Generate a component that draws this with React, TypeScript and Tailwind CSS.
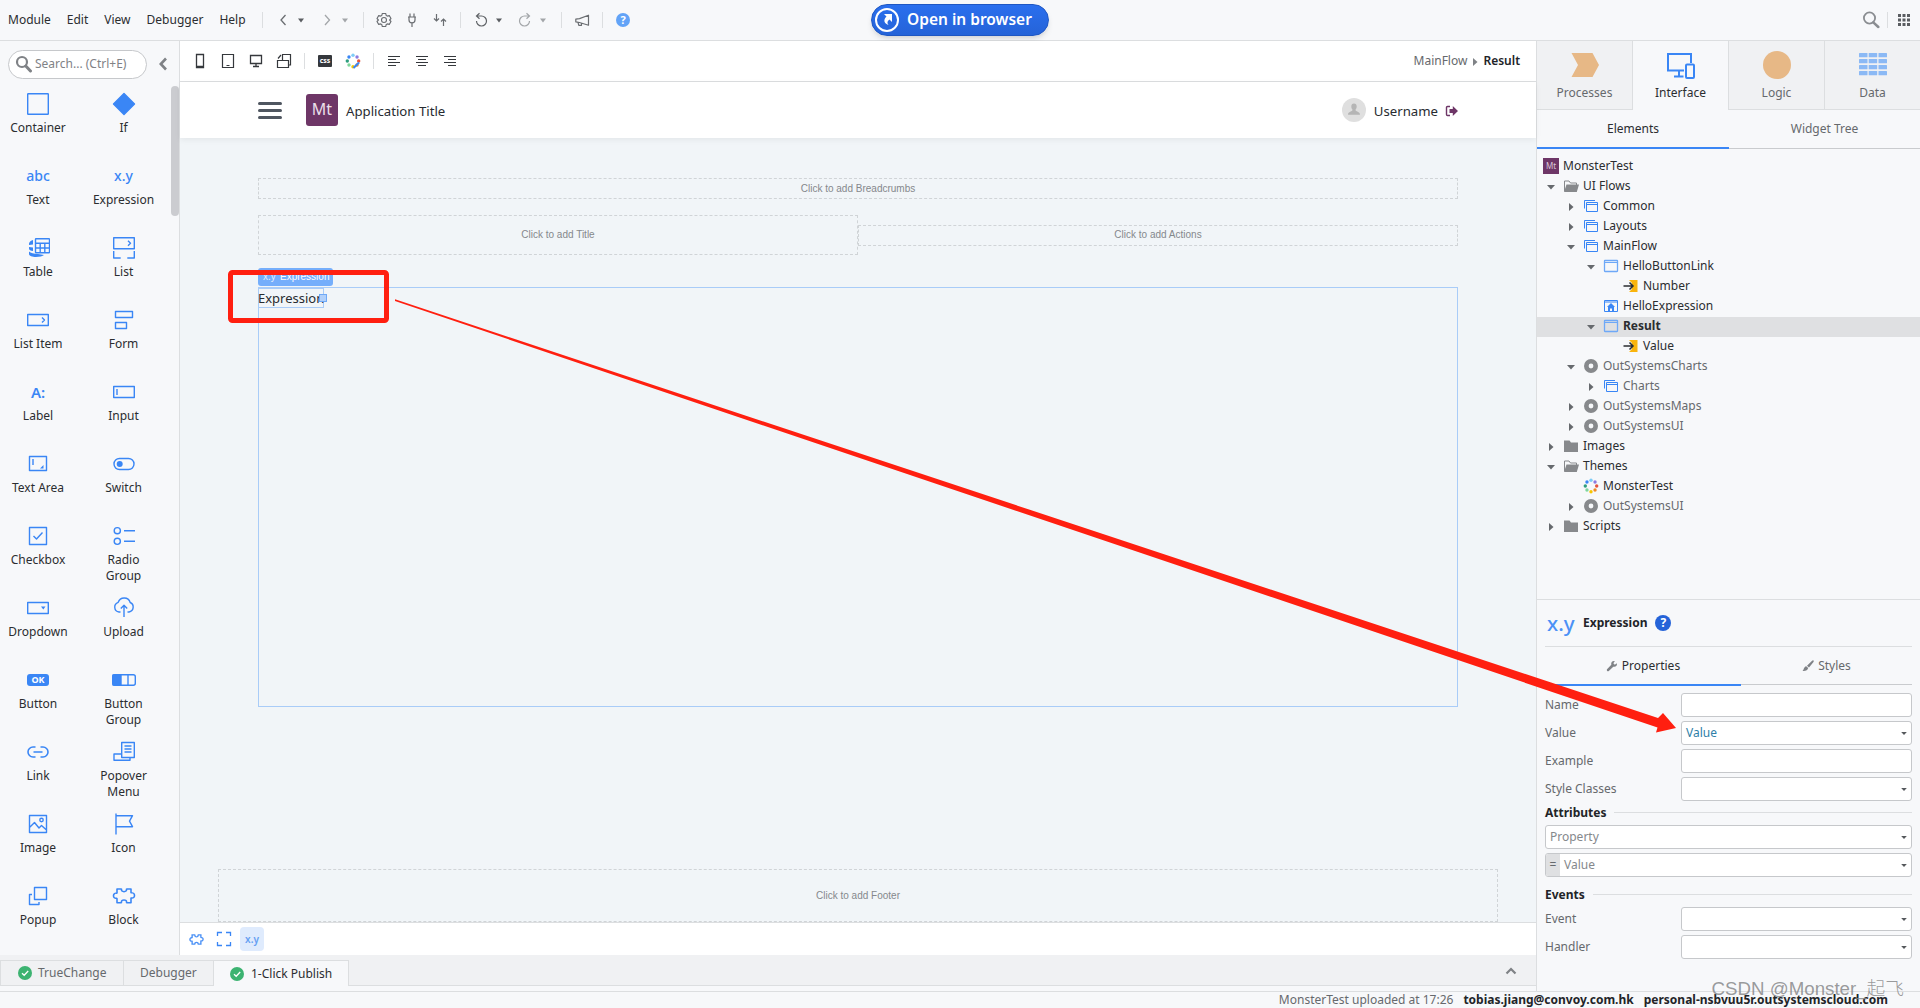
import type { ReactNode } from 'react';

const BLUE = '#3a86f5';

// ---------- shared bits ----------

function Svg({ w = 16, h = w, className = '', children }: { w?: number; h?: number; className?: string; children: ReactNode }) {
  return (
    <svg width={w} height={h} viewBox={`0 0 ${w} ${h}`} fill="none" className={`shrink-0 ${className}`}>
      {children}
    </svg>
  );
}

function Sep({ className = 'mx-3' }: { className?: string }) {
  return <div className={`h-4 w-px shrink-0 bg-[#dcdee0] ${className}`} />;
}

function CaretDown({ color = '#5a5d61', className = '' }: { color?: string; className?: string }) {
  return (
    <Svg w={8} className={className}>
      <path d="M1 2.5h6L4 6.5z" fill={color} />
    </Svg>
  );
}

const RING = ['#7fcdf7', '#8c7be0', '#e5533d', '#f08a24', '#f7c600', '#7fd69c', '#2f9e7e', '#3a86f5'];

function RingDots() {
  return (
    <>
      {RING.map((c, i) => {
        const a = (i * Math.PI) / 4 - Math.PI / 2;
        return <circle key={c} cx={8 + 5.7 * Math.cos(a)} cy={8 + 5.7 * Math.sin(a)} r="1.7" fill={c} />;
      })}
    </>
  );
}

const PUZZLE =
  'M5 4h4.2c.3 0 .4.3.3.6-.3 1.6.8 2.6 2.5 2.6s2.8-1 2.5-2.6c-.1-.3 0-.6.3-.6H19v4.2c0 .4.3.5.6.4 1.600-.4 2.900.9 2.900 2.900s-1.300 3.300-2.900 2.900c-.3-.1-.6 0-.6.4V20h-4.200c-.3 0-.4-.3-.3-.6.3-1.600-.8-2.600-2.500-2.600s-2.800 1-2.500 2.600c.1.3 0 .6-.3.6H5v-4.800c0-.4-.3-.5-.6-.4-1.600.4-2.900-.9-2.900-2.900s1.300-3.300 2.900-2.900c.3.1.6 0 .6-.4z';

// ---------- top bar ----------

function TopBar() {
  return (
    <div className="grid h-[41px] grid-cols-[1fr_auto_1fr] border-b border-[#dcdee0] bg-[#f7f8fa] text-[#2b2d30]">
      <div className="flex h-10 items-center">
        <div className="flex w-[262px] shrink-0 gap-4 pl-2">
          {['Module', 'Edit', 'View', 'Debugger', 'Help'].map(m => (
            <span key={m}>{m}</span>
          ))}
        </div>
        <Sep className="mr-3" />
        <Svg><path d="M10.500 3L6 8l4.500 5" stroke="#6a6d71" strokeWidth="1.300" /></Svg>
        <CaretDown className="ml-1.5" />
        <Svg className="ml-3.5"><path d="M6 3l4.500 5L6 13" stroke="#a3a6a9" strokeWidth="1.300" /></Svg>
        <CaretDown color="#a3a6a9" className="ml-1.5" />
        <Sep className="mr-3 ml-3.5" />
        <Svg>
          <path d="M6.300 1.500h3.400l.5 1.900 1.200.7 1.900-.5 1.700 2.900-1.400 1.500 1.400 1.500-1.700 2.900-1.900-.5-1.200.7-.5 1.900H6.300l-.5-1.900-1.200-.7-1.900.5L1 9.500 2.400 8 1 6.500l1.700-2.900 1.900.5 1.200-.7z" stroke="#6a6d71" strokeWidth="1.100" strokeLinejoin="round" />
          <circle cx="8" cy="8" r="2.500" stroke="#6a6d71" strokeWidth="1.100" />
        </Svg>
        <Svg className="ml-3">
          <path d="M6 1.500V5M10 1.500V5M4 5h8M5 5v3c0 1.800 1.200 2.800 3 2.800S11 9.800 11 8V5M8 10.800V15" stroke="#6a6d71" strokeWidth="1.200" />
        </Svg>
        <Svg className="ml-3">
          <path d="M4.500 2v6.500M2 6.500l2.500 2.500L7 6.500M11.500 14V7.500M9 9.500L11.500 7 14 9.500" stroke="#6a6d71" strokeWidth="1.200" />
        </Svg>
        <Sep />
        <Svg>
          <path d="M4 4h4.500a5 5 0 1 1-5 5M6.500 1.200L3.500 4l3 2.800" stroke="#5f6266" strokeWidth="1.200" />
        </Svg>
        <CaretDown className="ml-1.5" />
        <Svg className="ml-3.5">
          <path d="M12 4H7.500a5 5 0 1 0 5 5M9.500 1.200l3 2.800-3 2.800" stroke="#a3a6a9" strokeWidth="1.200" />
        </Svg>
        <CaretDown color="#a3a6a9" className="ml-1.5" />
        <Sep className="mr-3 ml-3.5" />
        <Svg>
          <path d="M14.500 3.200v10L5.500 10.500 1.800 9.800V7.200l3.700-.6zM4 10.300l.8 3h2.700v-2" stroke="#6a6d71" strokeWidth="1.200" strokeLinejoin="round" />
        </Svg>
        <Sep />
        <div className="ml-px flex h-3.5 w-3.5 items-center justify-center rounded-full bg-[#62a3f7] text-[11px] font-bold text-white">?</div>
      </div>

      <div className="my-1 flex h-8 w-[178px] items-center rounded-full border border-[#1f57c3] bg-linear-to-b from-[#2a6fee] to-[#2563d8] pl-[3px] text-white shadow-md">
        <Svg w={24}>
          <circle cx="12" cy="12" r="11" stroke="#fff" strokeWidth="2" />
          <path d="M9 6h8v8l-2.500-2.500c-2.300 1.400-2.700 3.300-1 5.500-4.500-1.500-5.500-5-2-8.500z" fill="#fff" />
        </Svg>
        <span className="ml-2 pb-0.5 text-[15.500px] font-semibold whitespace-nowrap">Open in browser</span>
      </div>

      <div className="flex h-10 items-center justify-end pr-[10px]">
        <Svg w={18}>
          <circle cx="7.500" cy="7" r="5.600" stroke="#8a8d91" strokeWidth="1.800" />
          <path d="M11.300 11.300L16.300 16" stroke="#8a8d91" strokeWidth="2.500" strokeLinecap="round" />
        </Svg>
        <Sep className="mr-[10px] ml-[7px]" />
        <Svg w={12}>
          {[0, 4.5, 9].map(x => [0, 4.5, 9].map(y => <rect key={`${x}-${y}`} x={x} y={y} width="3" height="3" fill="#5a5d61" />))}
        </Svg>
      </div>
    </div>
  );
}

// ---------- widget palette ----------

const txt = (s: string) => <span className="text-[14px] leading-6 font-medium text-[#3a86f5]">{s}</span>;

const draw = (children: ReactNode) => (
  <svg width="24" height="24" viewBox="0 0 24 24" fill="none" stroke={BLUE} strokeWidth="1.400" strokeLinejoin="round">
    {children}
  </svg>
);

const WIDGETS: { label: string; icon: ReactNode }[] = [
  { label: 'Container', icon: draw(<rect x="1.700" y="1.700" width="20.600" height="20.600" rx=".5" />) },
  { label: 'If', icon: draw(<path d="M12 1.500L22.500 12 12 22.500 1.500 12z" fill={BLUE} />) },
  { label: 'Text', icon: txt('abc') },
  { label: 'Expression', icon: txt('x.y') },
  {
    label: 'Table',
    icon: draw(
      <>
        <path d="M3 7.500c.5-2 2-3 4-3.500v4.500L3 9zM3 11l4 .5V15c-2.500 0-4-1-4-2.500zM3 15.500C4.500 17 8 18 12 18l6 1c-2.500 2.500-15 3-15-1z" fill={BLUE} stroke="none" />
        <rect x="9.500" y="2.700" width="14" height="14" rx=".5" />
        <path d="M9.500 7.200h14M9.500 12h14M14.200 7.200v9.500M18.800 7.200v9.500" />
      </>,
    ),
  },
  { label: 'List', icon: draw(<path d="M1.700 1.700h20.600v11H1.700zM16 4.700l2.500 2.500L16 9.700M1.700 15v7h7M22.300 15v7h-7" />) },
  { label: 'List Item', icon: draw(<path d="M1.700 6.500h20.600v11H1.700zM16 9.500l2.500 2.500-2.500 2.500" />) },
  { label: 'Form', icon: draw(<path d="M3.500 3.500h17v6h-17zM3.500 14.500h11v6h-11z" />) },
  { label: 'Label', icon: <span className="text-[15px] leading-6 font-semibold text-[#3a86f5]">A:</span> },
  { label: 'Input', icon: draw(<path d="M1.700 6.500h20.600v11H1.700zM5 9v6" />) },
  {
    label: 'Text Area',
    icon: draw(
      <>
        <path d="M3.500 4.500h17v14h-17zM7 7v6" />
        <path d="M17.500 13v3.500H14z" fill={BLUE} stroke="none" />
      </>,
    ),
  },
  {
    label: 'Switch',
    icon: draw(
      <>
        <rect x="2" y="6.500" width="20" height="11" rx="5.500" />
        <circle cx="7.700" cy="12" r="3" fill={BLUE} stroke="none" />
      </>,
    ),
  },
  { label: 'Checkbox', icon: draw(<path d="M3.500 3.500h17v17h-17zM7.500 12l3 3 6-6.500" />) },
  {
    label: 'Radio Group',
    icon: draw(
      <>
        <circle cx="5.300" cy="6.700" r="3.100" />
        <circle cx="5.300" cy="17.300" r="3.100" />
        <path d="M12 6.700h11M12 17.300h11" />
      </>,
    ),
  },
  {
    label: 'Dropdown',
    icon: draw(
      <>
        <path d="M1.700 6.500h20.600v11H1.700z" />
        <path d="M15 10.500h4.500l-2.200 3z" fill={BLUE} stroke="none" />
      </>,
    ),
  },
  { label: 'Upload', icon: draw(<path d="M8.500 16H7a5 5 0 0 1-.8-9.700 6.300 6.300 0 0 1 12 .2A5 5 0 0 1 17 16h-1.500M12 21V9.500M8.800 12.500L12 9.300l3.200 3.200" />) },
  {
    label: 'Button',
    icon: <span className="flex h-3 w-[22px] items-center justify-center rounded-[3px] bg-[#3a86f5] text-[9px] leading-3 font-bold text-white">OK</span>,
  },
  {
    label: 'Button Group',
    icon: draw(
      <>
        <rect x=".7" y="6.700" width="22.600" height="10.600" rx="2" />
        <path d="M1 7h8v10H1z" fill={BLUE} />
        <path d="M16 6.700v10.600" />
      </>,
    ),
  },
  { label: 'Link', icon: draw(<path d="M9.500 7H7a5 5 0 0 0 0 10h2.500M14.500 7H17a5 5 0 0 1 0 10h-2.500M7.500 12h9" strokeWidth="1.600" />) },
  { label: 'Popover Menu', icon: draw(<path d="M9.700 2.500h12.600v15H9.700zM12.500 6h7M12.500 9h7M12.500 12h7M9.700 14H2v6.300h16V17.500" />) },
  {
    label: 'Image',
    icon: draw(
      <>
        <path d="M3.500 3.500h17v17h-17zM3.500 15.500l5-5 4.500 5.500 2.500-2.500 5 4.500" />
        <circle cx="15.500" cy="8" r="1.700" />
      </>,
    ),
  },
  { label: 'Icon', icon: draw(<path d="M4 1.500v21M4 3.700h16.500l-3 5.500 3 5.500H4" />) },
  { label: 'Popup', icon: draw(<path d="M8.500 3.500h12v12h-12zM6 10.500H3.500v10h9.500V18" />) },
  { label: 'Block', icon: draw(<path d={PUZZLE} transform="translate(0 1.500) scale(1 .86)" strokeWidth="1.600" />) },
];

function Palette() {
  return (
    <div className="flex h-[914px] w-[180px] shrink-0 flex-col overflow-hidden border-r border-[#dcdee0] bg-[#f7f8fa]">
      <div className="flex h-[45px] shrink-0 items-center pt-[1px] pl-2">
        <div className="flex h-[29px] w-[139px] items-center rounded-full border border-[#c6c8cb] bg-white pl-1.5 text-[#7f8286]">
          <Svg w={18}>
            <circle cx="7" cy="7" r="5" stroke="#7f8286" strokeWidth="2.200" />
            <path d="M10.800 11L15.500 16" stroke="#7f8286" strokeWidth="3" strokeLinecap="round" />
          </Svg>
          <span className="ml-0.5">Search... (Ctrl+E)</span>
        </div>
        <Svg w={10} h={14} className="ml-[11px]">
          <path d="M8 1.500L2.800 7 8 12.500" stroke="#7f8286" strokeWidth="2.600" />
        </Svg>
      </div>
      <div className="flex">
        <div className="mt-1.5 ml-[5px] grid grid-cols-[66px_65px] gap-x-5">
          {WIDGETS.map(w => (
            <div key={w.label} className="flex h-[72px] flex-col items-center">
              <div className="flex h-6 items-center justify-center">{w.icon}</div>
              <span className="mt-1 text-center leading-4 text-[#2b2d30]">{w.label}</span>
            </div>
          ))}
        </div>
        <div className="ml-auto h-[130px] w-2 rounded-full bg-[#cbccd0]" />
      </div>
    </div>
  );
}

// ---------- canvas ----------

const INK = '#35383c';

function CanvasToolbar() {
  return (
    <div className="flex h-[41px] shrink-0 items-center gap-3 border-b border-[#dcdee0] bg-white pr-4 pl-3">
      <Svg><path d="M4.500 1.500h7v13h-7zM5 13.500h6" stroke={INK} strokeWidth="1.300" /></Svg>
      <Svg><path d="M2.500 1.500h11v13h-11zM6.500 12.500h3" stroke={INK} strokeWidth="1.200" /></Svg>
      <Svg><path d="M2.500 2.500h11v8h-11zM8 10.500V14M5 13.500h6" stroke={INK} strokeWidth="1.300" /></Svg>
      <Svg><path d="M1.500 7.500h11v7h-11zM6.500 7V1.500h8v10.500h-2.200M2 5.500L5 2" stroke={INK} strokeWidth="1.200" /></Svg>
      <Sep className="" />
      <span className="flex h-3 w-4 items-center justify-center">
        <span className="flex h-3 w-3.5 items-center justify-center rounded-[1px] bg-[#35383c] text-[7px] leading-3 font-bold text-white">css</span>
      </span>
      <Svg>
        <RingDots />
        <path d="M8.500 15l5.500-5.500" stroke={BLUE} strokeWidth="2.200" />
      </Svg>
      <Sep className="" />
      <Svg><path d="M2 3.500h12M2 6.500h8M2 9.500h12M2 12.500h8" stroke={INK} /></Svg>
      <Svg><path d="M2 3.500h12M4 6.500h8M2 9.500h12M4 12.500h8" stroke={INK} /></Svg>
      <Svg><path d="M2 3.500h12M6 6.500h8M2 9.500h12M6 12.500h8" stroke={INK} /></Svg>
      <div className="ml-auto flex items-center">
        <span className="text-[#66696d]">MainFlow</span>
        <Svg w={6} h={8} className="mx-[5px] mt-0.5"><path d="M1 0v8l4.500-4z" fill="#7f8286" /></Svg>
        <span className="font-semibold text-[#222428]">Result</span>
      </div>
    </div>
  );
}

function Placeholder({ text, className }: { text: string; className: string }) {
  return (
    <div className={`flex items-center justify-center border border-dashed border-[#d0d4d7] font-['Liberation_Sans',sans-serif] text-[10px] text-[#85888c] ${className}`}>
      {text}
    </div>
  );
}

function Canvas() {
  return (
    <div className="flex w-[1356px] shrink-0 flex-col">
      <CanvasToolbar />
      <div className="z-10 flex h-[56px] shrink-0 items-center bg-white px-[78px] text-[13.200px] text-[#272b30] shadow-[0_2px_6px_rgba(0,0,0,0.06)]">
        <div className="flex w-6 flex-col gap-1">
          <div className="h-[3px] rounded-sm bg-[#4f5660]" />
          <div className="h-[3px] rounded-sm bg-[#4f5660]" />
          <div className="h-[3px] rounded-sm bg-[#4f5660]" />
        </div>
        <div className="ml-6 flex h-8 w-8 items-center justify-center rounded-[3px] bg-[#6e3667] pb-[3px] text-[16px] text-[#eadfe9]">Mt</div>
        <span className="mt-0.5 ml-2">Application Title</span>
        <Svg w={24} className="ml-auto">
          <circle cx="12" cy="12" r="12" fill="#dfdfdf" />
          <path d="M12 5.500c1.700 0 2.700 1.200 2.700 3 0 1.500-.6 2.500-1.200 3.200 0 2 4.500 1.500 4.500 5H6c0-3.500 4.500-3 4.500-5-.6-.7-1.200-1.700-1.200-3.200 0-1.800 1-3 2.700-3z" fill="#b5b5b5" />
        </Svg>
        <span className="mt-0.5 ml-2">Username</span>
        <Svg w={13} h={12} className="mt-0.5 ml-[7px]">
          <path d="M5 1.500H2.500a1 1 0 0 0-1 1v7a1 1 0 0 0 1 1H5" stroke="#6e3667" strokeWidth="1.400" />
          <path d="M4.500 4h3.300V1L13 6l-5.200 5V8H4.500z" fill="#6e3667" />
        </Svg>
      </div>

      <div className="flex h-[784px] shrink-0 flex-col bg-[#f1f5f8] px-[38px] pt-10">
        <div className="px-10">
          <Placeholder text="Click to add Breadcrumbs" className="h-[21px]" />
          <div className="mt-4 flex items-center">
            <Placeholder text="Click to add Title" className="h-10 w-[600px]" />
            <Placeholder text="Click to add Actions" className="h-[21px] w-[600px]" />
          </div>
          <div className="mt-[13px] flex h-[18px] w-[75px] items-center rounded-[3px] bg-[#75aefb] pl-[5px] font-['Liberation_Sans',sans-serif] text-[10px] text-white">
            <span className="w-[17px] opacity-80">x.y</span>Expression
          </div>
          <div className="mt-px h-[420px] border border-[#a9ccf8]">
            <div className="relative -ml-px h-5 w-[66px] border border-[#a9ccf8] text-[13px] leading-[18px] text-[#272b30]">
              <span className="-ml-px">Expression</span>
              <div className="absolute top-[5px] left-[60px] h-2 w-2 border border-[#6fa9f7] bg-[#b1d0fa]" />
            </div>
          </div>
        </div>
        <Placeholder text="Click to add Footer" className="mt-auto h-[53px]" />
      </div>

      <div className="flex h-[33px] shrink-0 items-center border-t border-[#dcdee0] bg-white pl-2">
        <div className="flex w-4 justify-center">
          <svg width="15" height="13" viewBox="0 0 24 20" fill="none" stroke="#4b91f6" strokeWidth="2.200">
            <path d={PUZZLE} transform="translate(0 -1) scale(1 .92)" />
          </svg>
        </div>
        <Svg className="ml-3"><path d="M1.500 5V1.500H6M10 1.500h4.500V5M14.500 11v3.500H10M6 14.500H1.500V11" stroke={BLUE} strokeWidth="1.300" /></Svg>
        <div className="ml-2 flex h-6 w-6 items-center justify-center rounded bg-[#dfebfd] text-[10px] font-semibold text-[#659ff3]">x.y</div>
      </div>
    </div>
  );
}

function Check() {
  return (
    <Svg w={14}>
      <circle cx="7" cy="7" r="7" fill="#3cb371" />
      <path d="M4 7.200l2.200 2.100L10.200 5" stroke="#fff" strokeWidth="1.300" />
    </Svg>
  );
}

function BottomTabs() {
  return (
    <div className="flex h-9 w-[1536px] flex-col">
      <div className="flex h-[31px] items-end bg-[#f0f1f3] text-[#66696d]">
        <div className="flex h-[26px] w-[124px] shrink-0 items-center gap-1.5 border border-[#dcdee0] pl-[17px]"><Check />TrueChange</div>
        <div className="flex h-[26px] w-[89px] shrink-0 items-center border-y border-[#dcdee0] pl-4">Debugger</div>
        <div className="flex h-[26px] w-[136px] shrink-0 items-center gap-[7px] border-x border-t border-[#dcdee0] bg-[#f7f8fa] pl-4 text-[#2b2d30]"><Check />1-Click Publish</div>
        <div className="flex h-[26px] flex-1 items-center justify-end border-b border-[#dcdee0] pr-[19px] pb-1">
          <Svg w={12} h={8}><path d="M1.500 6.500L6 2l4.500 4.500" stroke="#7f8286" strokeWidth="2.200" /></Svg>
        </div>
      </div>
    </div>
  );
}

// ---------- right panel: element tree ----------

type IconName = 'app' | 'open' | 'folder' | 'flow' | 'screen' | 'home' | 'input' | 'gear' | 'ring';

const TREE_ICONS: Record<IconName, ReactNode> = {
  app: <span className="flex h-4 w-4 items-center justify-center bg-[#6e3667] pb-px text-[8px] leading-4 text-[#d9c6d7]">Mt</span>,
  open: (
    <Svg>
      <path d="M1.500 13V3h4.500l1.500 2h6v2" stroke="#87898c" />
      <path d="M3.500 6.500H16L13.800 14H1z" fill="#87898c" />
    </Svg>
  ),
  folder: <Svg><path d="M1 2.500h5.500L8 4.500h7V14H1z" fill="#87898c" /></Svg>,
  flow: <Svg><path d="M3.500 4.500h11v9h-11zM3.500 6.500h11M1.500 10.500v-8h10.500" stroke={BLUE} /></Svg>,
  screen: (
    <Svg>
      <rect x="1.500" y="2.500" width="13" height="11" rx=".5" stroke="#6ea8f7" strokeWidth="1.300" />
      <path d="M1.500 4.500h13" stroke="#6ea8f7" />
    </Svg>
  ),
  home: (
    <Svg>
      <path d="M1.500 2.500h13v11h-13zM1.500 4h13" stroke={BLUE} />
      <path d="M8 5l4 4h-1v4H9v-2.500H7V13H5V9H4z" fill={BLUE} />
    </Svg>
  ),
  input: (
    <Svg>
      <path d="M6 2h8.500v12H6l3-3V5z" fill="#f9b40d" />
      <path d="M.5 8h9M6.500 4.500L10 8l-3.500 3.500" stroke="#2b2d30" strokeWidth="1.500" />
    </Svg>
  ),
  gear: <Svg><circle cx="8" cy="8" r="4.700" stroke="#87898c" strokeWidth="4.600" /></Svg>,
  ring: <Svg><RingDots /></Svg>,
};

interface Node {
  label: string;
  icon: IconName;
  level: number;
  arrow?: 'down' | 'right';
  muted?: boolean;
  selected?: boolean;
}

const TREE: Node[] = [
  { label: 'UI Flows', icon: 'open', level: 0, arrow: 'down' },
  { label: 'Common', icon: 'flow', level: 1, arrow: 'right' },
  { label: 'Layouts', icon: 'flow', level: 1, arrow: 'right' },
  { label: 'MainFlow', icon: 'flow', level: 1, arrow: 'down' },
  { label: 'HelloButtonLink', icon: 'screen', level: 2, arrow: 'down' },
  { label: 'Number', icon: 'input', level: 3 },
  { label: 'HelloExpression', icon: 'home', level: 2 },
  { label: 'Result', icon: 'screen', level: 2, arrow: 'down', selected: true },
  { label: 'Value', icon: 'input', level: 3 },
  { label: 'OutSystemsCharts', icon: 'gear', level: 1, arrow: 'down', muted: true },
  { label: 'Charts', icon: 'flow', level: 2, arrow: 'right', muted: true },
  { label: 'OutSystemsMaps', icon: 'gear', level: 1, arrow: 'right', muted: true },
  { label: 'OutSystemsUI', icon: 'gear', level: 1, arrow: 'right', muted: true },
  { label: 'Images', icon: 'folder', level: 0, arrow: 'right' },
  { label: 'Themes', icon: 'open', level: 0, arrow: 'down' },
  { label: 'MonsterTest', icon: 'ring', level: 1 },
  { label: 'OutSystemsUI', icon: 'gear', level: 1, arrow: 'right', muted: true },
  { label: 'Scripts', icon: 'folder', level: 0, arrow: 'right' },
];

function Tree() {
  return (
    <div className="h-[450px] pt-2 text-[#2b2d30]">
      <div className="flex h-5 items-center pb-0.5 pl-1">
        <span className="flex w-5 justify-center">{TREE_ICONS.app}</span>
        <span className="ml-0.5">MonsterTest</span>
      </div>
      {TREE.map((n, i) => (
        <div
          key={i}
          className={`flex h-5 items-center pb-0.5 ${n.selected ? 'bg-[#dfe0e2] font-bold' : ''} ${n.muted ? 'text-[#66696d]' : ''}`}
          style={{ paddingLeft: 4 + n.level * 20 }}
        >
          <span className="flex w-5 justify-center">
            {n.arrow && (
              <Svg w={8} className="mt-px">
                <path d={n.arrow === 'down' ? 'M0 2h8L4 6.500z' : 'M2 0v8l4.500-4z'} fill="#66696d" />
              </Svg>
            )}
          </span>
          <span className="flex w-5 justify-center">{TREE_ICONS[n.icon]}</span>
          <span className="ml-0.5">{n.label}</span>
        </div>
      ))}
    </div>
  );
}

const LAYERS: { label: string; icon: ReactNode }[] = [
  { label: 'Processes', icon: <path d="M.5 2h21L28 14l-6.500 12H.5L7 14z" fill="#e7b886" /> },
  {
    label: 'Interface',
    icon: (
      <>
        <path d="M17 19.500H1V3h23v9M12 20v5M7 25.500h9.500" stroke={BLUE} strokeWidth="2" />
        <rect x="19" y="13.500" width="8" height="13.500" rx="1" stroke={BLUE} strokeWidth="2" />
      </>
    ),
  },
  { label: 'Logic', icon: <circle cx="14" cy="14" r="14" fill="#e7b886" /> },
  {
    label: 'Data',
    icon: (
      <>
        {[0, 9.7, 19.5].map(x => [2, 8, 14, 20].map(y => <rect key={`${x}-${y}`} x={x} y={y} width="8.500" height="4.300" rx=".5" fill="#8bb9f5" />))}
      </>
    ),
  },
];

function LayerTabs() {
  return (
    <div className="flex h-[69px]">
      {LAYERS.map((l, i) => {
        const active = l.label === 'Interface';
        return (
          <div
            key={l.label}
            className={`flex flex-1 flex-col items-center border-[#dcdee0] pt-[10px] ${i < 3 ? 'border-r' : ''} ${active ? 'text-[#2b2d30]' : 'border-b bg-[#f0f1f3] text-[#66696d]'}`}
          >
            <Svg w={28}>{l.icon}</Svg>
            <span className="mt-1.5 leading-4">{l.label}</span>
          </div>
        );
      })}
    </div>
  );
}

// ---------- right panel: properties ----------

function Field({ label, value, dropdown }: { label: string; value?: string; dropdown?: boolean }) {
  return (
    <div className="flex h-6 items-center text-[#66696d]">
      <span className="w-[136px] shrink-0">{label}</span>
      <div className="flex h-6 flex-1 items-center rounded-[3px] border border-[#c6c8cb] bg-white pr-[3px] pl-1">
        <span className="text-[#2f7fa8]">{value}</span>
        {dropdown && <Svg w={8} className="ml-auto"><path d="M1.200 3h5.600L4 6z" fill="#55585c" /></Svg>}
      </div>
    </div>
  );
}

function Section({ label, className }: { label: string; className: string }) {
  return (
    <div className={`flex h-4 items-center gap-2 font-bold text-[#222428] ${className}`}>
      <span className="mt-0.5">{label}</span>
      <div className="h-px flex-1 bg-[#dcdee0]" />
    </div>
  );
}

function Properties() {
  return (
    <div className="flex flex-1 flex-col border-t border-[#dcdee0] px-2">
      <div className="flex h-[47px] items-center border-b border-[#dcdee0] pl-0.5">
        <span className="w-9 text-[20.500px] leading-6 font-medium text-[#4b91f6]">x.y</span>
        <span className="font-bold text-[#222428]">Expression</span>
        <span className="ml-2 flex h-4 w-4 items-center justify-center rounded-full bg-[#2563d8] text-[12px] leading-4 font-bold text-white">?</span>
      </div>
      <div className="flex h-[39px] text-[#66696d]">
        <div className="flex w-[196px] items-center justify-center border-b-2 border-[#3a86f5] text-[#2b2d30]">
          <Svg w={12} className="mr-1">
            <path d="M10.800 3.200L8.800 4.700 7.300 3.200 8.800 1.200C6.500.6 4.700 2.500 5.300 4.700L1 9.300a1.300 1.300 0 0 0 1.800 1.800L7.300 6.700c2.500.6 4.300-1.500 3.500-3.500z" fill="#7f8286" />
          </Svg>
          Properties
        </div>
        <div className="mb-px flex flex-1 items-center justify-center border-b border-[#c9cbce]">
          <Svg w={12} className="mr-1">
            <path d="M11.500.5c.5.500.3 1-.2 1.800L7 7.500 5 5.700 9.800 1c.7-.6 1.200-.9 1.700-.5zM4.200 6.300l2 1.800C5.800 10.500 3.500 11.300.5 11c1.500-1 1-4 3.700-4.700z" fill="#7f8286" />
          </Svg>
          Styles
        </div>
      </div>
      <div className="mt-[7px] flex flex-col gap-1">
        <Field label="Name" />
        <Field label="Value" value="Value" dropdown />
        <Field label="Example" />
        <Field label="Style Classes" dropdown />
      </div>
      <Section label="Attributes" className="mt-[3px]" />
      <div className="mt-[5px] flex flex-col gap-1 text-[#85888c]">
        <div className="flex h-6 items-center justify-between rounded-[3px] border border-[#c6c8cb] bg-white pr-[3px] pl-1">
          <span>Property</span>
          <Svg w={8}><path d="M1.200 3h5.600L4 6z" fill="#55585c" /></Svg>
        </div>
        <div className="flex h-6 items-center overflow-hidden rounded-[3px] border border-[#c6c8cb] bg-white pr-[3px]">
          <span className="flex h-full w-3.5 items-center justify-center bg-[#dfe0e2] text-[#66696d]">=</span>
          <span className="ml-1">Value</span>
          <Svg w={8} className="ml-auto"><path d="M1.200 3h5.600L4 6z" fill="#55585c" /></Svg>
        </div>
      </div>
      <Section label="Events" className="mt-[9px]" />
      <div className="mt-[5px] flex flex-col gap-1">
        <Field label="Event" dropdown />
        <Field label="Handler" dropdown />
      </div>
    </div>
  );
}

function RightPanel() {
  return (
    <div className="flex h-[950px] w-[384px] shrink-0 flex-col border-l border-[#dcdee0] bg-[#f7f8fa]">
      <LayerTabs />
      <div className="flex h-[39px] shrink-0">
        <div className="flex w-[192px] items-center justify-center border-b-2 border-[#3a86f5] text-[#2b2d30]">Elements</div>
        <div className="flex w-[191px] items-center justify-center border-b border-[#c9cbce] pb-px text-[#66696d]">Widget Tree</div>
      </div>
      <Tree />
      <Properties />
    </div>
  );
}

export default function App() {
  return (
    <div className="relative h-[1008px] w-[1920px] overflow-hidden bg-[#f7f8fa] font-['Noto_Sans','Noto_Sans_CJK_SC',sans-serif] text-[12px] leading-4">
      <TopBar />
      <div className="flex h-[950px]">
        <div>
          <div className="flex h-[914px]">
            <Palette />
            <Canvas />
          </div>
          <BottomTabs />
        </div>
        <RightPanel />
      </div>
      <div className="flex h-[17px] items-center justify-end gap-[10px] border-t border-[#dcdee0] pr-8 font-bold whitespace-nowrap text-[#222428]">
        <span className="font-normal text-[#66696d]">MonsterTest uploaded at 17:26</span>
        <span>tobias.jiang@convoy.com.hk</span>
        <span>personal-nsbvuu5r.outsystemscloud.com</span>
      </div>

      {/* annotation overlay */}
      <svg width="1920" height="1008" className="absolute top-0 left-0 z-20" fill="none">
        <rect x="230.500" y="272.500" width="156" height="48" rx="2" stroke="#ff1f10" strokeWidth="5" />
        <path d="M395 299.300L1658 718l5-5 13 15-20 4.500 1.500-5L395 301z" fill="#ff1f10" />
      </svg>
      <span className="absolute right-4 bottom-[7px] font-['Liberation_Sans','Noto_Sans_CJK_SC',sans-serif] text-[18.700px] leading-6 font-light whitespace-nowrap text-[#88898b]/85">CSDN @Monster_起飞</span>
    </div>
  );
}
